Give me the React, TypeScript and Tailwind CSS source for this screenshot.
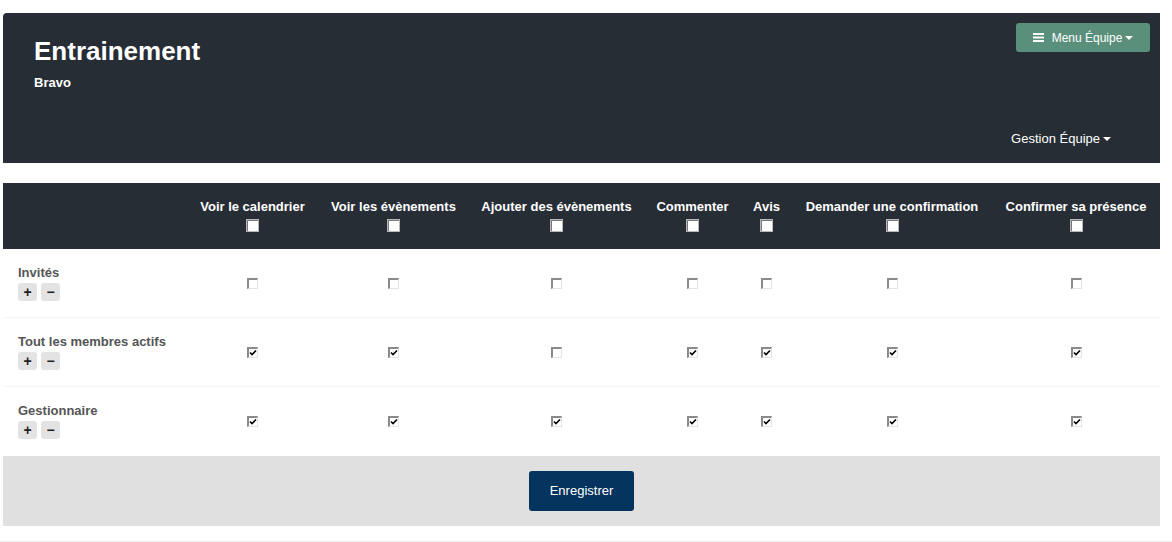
import React from "react";

const cols = [
  "Voir le calendrier",
  "Voir les évènements",
  "Ajouter des évènements",
  "Commenter",
  "Avis",
  "Demander une confirmation",
  "Confirmer sa présence",
];

const rows: { name: string; checks: boolean[] }[] = [
  { name: "Invités", checks: [false, false, false, false, false, false, false] },
  { name: "Tout les membres actifs", checks: [true, true, false, true, true, true, true] },
  { name: "Gestionnaire", checks: [true, true, true, true, true, true, true] },
];

const grid =
  "grid grid-cols-[184px_131px_151px_175px_97px_51px_200px_168px]";

function HeadBox() {
  return (
    <span className="block w-[13px] h-[13px] bg-white border border-[#b8b8b8] shadow-[inset_1px_1px_0_#7a7a7a]" />
  );
}

function Box({ checked }: { checked: boolean }) {
  return (
    <span className="relative block w-[11px] h-[11px] bg-white border-t-2 border-l-2 border-t-[#8a8a8a] border-l-[#8a8a8a] border-r border-b border-r-[#e4e4e4] border-b-[#e4e4e4]">
      {checked && (
        <svg
          viewBox="0 0 8 8"
          className="absolute left-[0px] top-[0px] w-[8px] h-[8px]"
        >
          <path d="M1 3.5 L3 5.5 L7 1.5" stroke="#000" strokeWidth="1.6" fill="none" />
        </svg>
      )}
    </span>
  );
}

function Caret() {
  return (
    <svg viewBox="0 0 8 4" className="w-[8px] h-[4px] inline-block ml-[3px]">
      <path d="M0 0 L8 0 L4 4 Z" fill="#fff" />
    </svg>
  );
}

export default function App() {
  return (
    <div
      className="w-[1172px] h-[542px] bg-white relative"
      style={{ fontFamily: '"Liberation Sans", Arial, sans-serif' }}
    >
      <div className="h-[13px]" />
      <div className="ml-[3px] w-[1157px] h-[150px] bg-[#272d35] rounded-tl-[4px] flex justify-between">
        <div className="pl-[31px] pt-[23px]">
          <div className="text-white font-bold text-[26px] leading-[30px]">
            Entrainement
          </div>
          <div className="text-white font-bold text-[13px] leading-[15px] mt-[9px]">
            Bravo
          </div>
        </div>
        <div className="flex flex-col items-end justify-between pt-[10px] pr-[10px] pb-[17px]">
          <div className="w-[134px] h-[29px] bg-[#5a8f7b] rounded-[3px] flex items-center justify-center text-white text-[12px]">
            <svg viewBox="0 0 11 9" className="w-[11px] h-[9px] mr-[8px]">
              <rect x="0" y="0" width="11" height="2" fill="#fff" />
              <rect x="0" y="3.5" width="11" height="2" fill="#fff" />
              <rect x="0" y="7" width="11" height="2" fill="#fff" />
            </svg>
            <span>Menu Équipe</span>
            <Caret />
          </div>
          <div className="mr-[39px] text-white text-[13px] leading-[15px] flex items-center">
            <span>Gestion Équipe</span>
            <Caret />
          </div>
        </div>
      </div>

      <div className="h-[20px]" />

      <div className="ml-[3px] w-[1157px]">
        <div className={`${grid} bg-[#272d35] h-[66px]`}>
          <div />
          {cols.map((c) => (
            <div key={c} className="flex flex-col items-center pt-[16px]">
              <span className="text-white font-bold text-[13px] leading-[15px] whitespace-nowrap">
                {c}
              </span>
              <span className="mt-[5px]">
                <HeadBox />
              </span>
            </div>
          ))}
        </div>

        {rows.map((r, i) => (
          <div
            key={r.name}
            className={`${grid} h-[69px] ${i < rows.length - 1 ? "border-b border-[#f6f6f6]" : ""}`}
          >
            <div className="pl-[15px] pt-[16px]">
              <div className="text-[#555] font-bold text-[13px] leading-[15px]">
                {r.name}
              </div>
              <div className="flex gap-[4px] mt-[3px]">
                <span className="w-[19px] h-[18px] bg-[#e3e3e3] rounded-[3px] flex items-center justify-center text-[#222] font-bold text-[14px] leading-none">
                  +
                </span>
                <span className="w-[19px] h-[18px] bg-[#e3e3e3] rounded-[3px] flex items-center justify-center text-[#222] font-bold text-[14px] leading-none">
                  −
                </span>
              </div>
            </div>
            {r.checks.map((c, j) => (
              <div key={j} className="flex items-center justify-center">
                <Box checked={c} />
              </div>
            ))}
          </div>
        ))}

        <div className="h-[70px] bg-[#e0e0e0] flex items-center justify-center">
          <div className="w-[105px] h-[40px] bg-[#04335d] rounded-[3px] flex items-center justify-center text-white text-[13px]">
            Enregistrer
          </div>
        </div>
      </div>
      <div className="absolute left-0 right-0 top-[541px] h-[1px] bg-[#ececec]" />
    </div>
  );
}
